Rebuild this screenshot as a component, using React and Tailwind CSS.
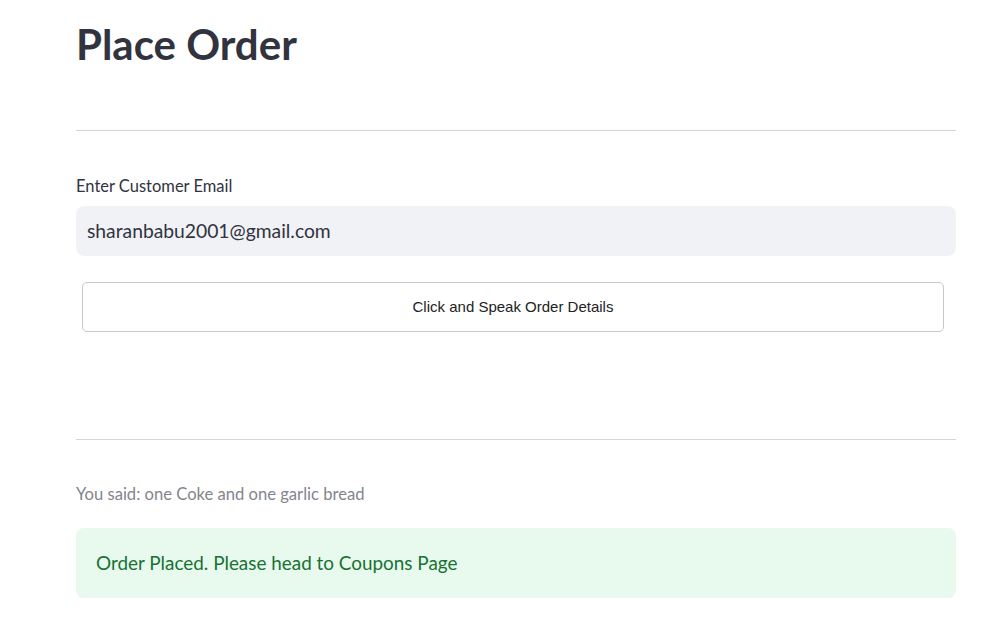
export default function App() {
  return (
    <div className="min-h-screen bg-white font-['Lato','Noto_Sans',sans-serif] text-[#31333f]">
      <div className="ml-[76px] w-[880px] pt-[14px]">
        <h1 className="text-[42px] font-bold leading-[60px]">Place Order</h1>

        <hr className="mt-[56px] border-t border-[#d6d6d9]" />

        <label className="mt-[45px] block text-[16.5px] leading-[20px]">Enter Customer Email</label>
        <div className="mt-[10px] flex h-[50px] items-center rounded-lg bg-[#f0f2f6] px-[11px] text-[19.3px]">
          sharanbabu2001@gmail.com
        </div>

        <div className="pl-[6px] pr-[12px] pt-[26px]">
          <button className="flex h-[50px] w-full items-center justify-center rounded-[5px] border border-[#c8c8c8] bg-white font-['Liberation_Sans',Arial,sans-serif] text-[15px] text-[#222]">
            Click and Speak Order Details
          </button>
        </div>

        <hr className="mt-[107px] border-t border-[#d6d6d9]" />

        <p className="mt-[44px] text-[16.6px] leading-[20px] text-[#83858c]">You said: one Coke and one garlic bread</p>

        <div className="mt-[24px] flex h-[70px] items-center rounded-lg bg-[#e8f9ee] px-[20px] text-[18.9px] text-[#177233]">
          Order Placed. Please head to Coupons Page
        </div>
      </div>
    </div>
  );
}
